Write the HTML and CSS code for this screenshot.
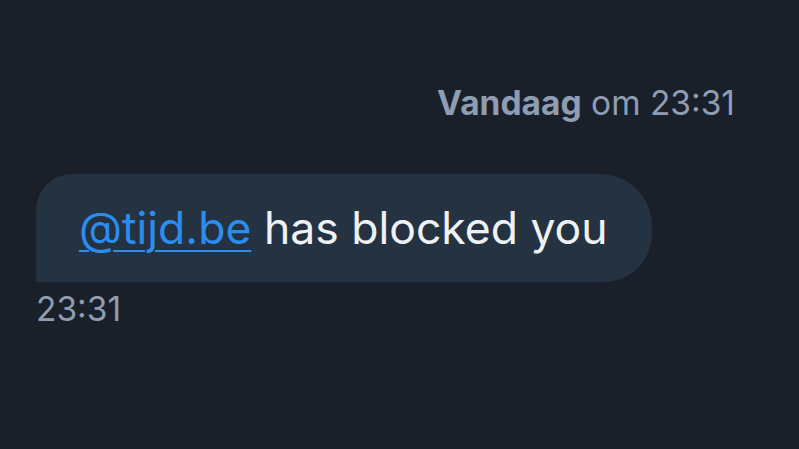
FILE: index.html
```html
<!DOCTYPE html>
<html>
<head>
<meta charset="utf-8">
<link rel="stylesheet" href="styles.css">
</head>
<body>
<main class="chat">
  <div class="day"><strong>Vandaag</strong> om 23:31</div>
  <div class="msg">
    <div class="bubble"><a class="mention" href="#">@tijd.be</a> has blocked you</div>
    <div class="time">23:31</div>
  </div>
</main>
</body>
</html>
```
FILE: styles.css
```css
html, body {
  margin: 0;
  height: 100%;
  background: #19202a;
}
body {
  font-family: Inter, "Noto Sans", sans-serif;
}
.chat {
  padding: 81px 64px 0 36px;
  display: flex;
  flex-direction: column;
}
.day {
  align-self: flex-end;
  font-size: 33.5px;
  line-height: 44px;
  color: #8e9db1;
}
.day strong {
  font-weight: 700;
}
.msg {
  margin-top: 49px;
  display: flex;
  flex-direction: column;
  align-items: flex-start;
}
.bubble {
  background: #253242;
  color: #eef2f7;
  font-size: 44.5px;
  line-height: 52px;
  padding: 28px 44px 28px 43px;
  border-radius: 36px 52px 48px 0;
}
.mention {
  color: #2b8def;
  text-decoration: underline;
  text-underline-offset: 6px;
  text-decoration-thickness: 2px;
}
.time {
  margin-top: 7px;
  font-size: 33.5px;
  line-height: 40px;
  color: #8e9db1;
}
```
